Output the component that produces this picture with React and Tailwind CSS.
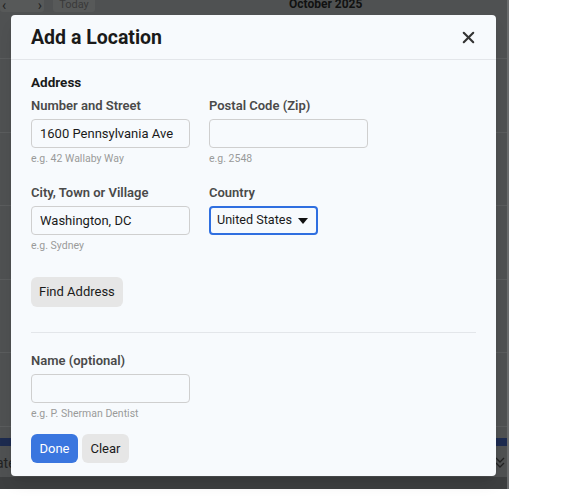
import React, { useState } from "react";
import { X } from "lucide-react";

function Field({ label, hint, value, onChange, width = "w-[159px]" }) {
  return (
    <div className="flex flex-col">
      <label className="text-[13px] font-semibold text-[#4a4a4a] leading-[16px] mb-[5px]">
        {label}
      </label>
      <input
        value={value}
        onChange={(e) => onChange(e.target.value)}
        className={`${width} h-[29px] rounded-[4px] border border-[#cfcfcf] bg-[#f7fafd] px-[8px] text-[13px] text-[#1a1a1a] outline-none`}
      />
      <span className="text-[10.5px] text-[#9a9a9a] mt-[4px] leading-[14px]">{hint}</span>
    </div>
  );
}

function App() {
  const [street, setStreet] = useState("1600 Pennsylvania Ave");
  const [zip, setZip] = useState("");
  const [city, setCity] = useState("Washington, DC");
  const [name, setName] = useState("");

  return (
    <div
      className="relative w-[579px] h-[500px] bg-white overflow-hidden"
      style={{ fontFamily: "Roboto, 'Liberation Sans', sans-serif" }}
    >
      {/* calendar behind the dialog, dimmed */}
      <div className="w-[509px] h-[489px] bg-[#4f5152] border-r-2 border-[#6a6c6d] flex flex-col">
        <div className="h-[59px] flex items-start relative border-b border-[#5a5c5d]">
          <div className="flex mt-[-9px]">
            <div className="w-[44px] h-[21px] rounded-[3px] bg-[#575959] flex items-end justify-between px-[2px] text-[#222] text-[14px] leading-[14px]">
              <span>‹</span>
              <span>›</span>
            </div>
            <div className="ml-[9px] w-[42px] h-[21px] rounded-[3px] bg-[#575959] flex items-end justify-center text-[11px] text-[#3a3a3a] leading-[14px]">
              Today
            </div>
          </div>
          <div className="absolute left-[289px] top-[-5px] text-[12px] font-bold text-[#111]">
            October 2025
          </div>
        </div>
        {[0, 1, 2, 3, 4].map((i) => (
          <div key={i} className="h-[73.5px] border-b border-[#5a5c5d]" />
        ))}
        <div className="h-[11px] bg-[#4f5152]" />
        <div className="h-[8px] bg-[#1d2b4f]" />
        <div className="flex-1 flex items-center justify-between pr-[1px]">
          <span className="text-[14px] text-[#222] ml-[-4px] mt-[4px]">ate</span>
          <svg width="12" height="14" viewBox="0 0 12 14" className="mt-[4px]">
            <path d="M2 2l4 4 4-4M2 7l4 4 4-4" fill="none" stroke="#222" strokeWidth="1.3" />
          </svg>
        </div>
        <div className="h-[12px] bg-[#3d3f40]" />
      </div>

      {/* dialog */}
      <div className="absolute left-[11px] top-[15px] w-[485px] h-[461px] bg-[#f7fafd] rounded-[4px] shadow-lg flex flex-col">
        <div className="h-[45px] shrink-0 flex items-center justify-between px-[20px] border-b border-[#e3e6ea]">
          <h2 className="text-[19.5px] font-bold text-[#1a1a1a] mt-[1px]">Add a Location</h2>
          <button className="text-[#333] mr-[-2px]">
            <X size={19} strokeWidth={2.6} />
          </button>
        </div>

        <div className="px-[20px] pt-[13px] flex flex-col">
          <h3 className="text-[13.5px] font-bold text-[#1a1a1a] leading-[18px] mb-[7px]">Address</h3>
          <div className="flex gap-[19px]">
            <Field label="Number and Street" hint="e.g. 42 Wallaby Way" value={street} onChange={setStreet} />
            <Field label="Postal Code (Zip)" hint="e.g. 2548" value={zip} onChange={setZip} />
          </div>
          <div className="flex gap-[19px] mt-[19px]">
            <Field label="City, Town or Village" hint="e.g. Sydney" value={city} onChange={setCity} />
            <div className="flex flex-col">
              <label className="text-[13px] font-semibold text-[#4a4a4a] leading-[16px] mb-[5px]">
                Country
              </label>
              <div className="w-[109px] h-[29px] rounded-[4px] border-2 border-[#2f6fe0] flex items-center gap-[6px] pl-[6px] text-[12.6px] text-[#1a1a1a] whitespace-nowrap">
                <span>United States</span>
                <svg width="10" height="6" viewBox="0 0 10 6">
                  <path d="M0 0h10L5 6z" fill="#111" />
                </svg>
              </div>
            </div>
          </div>

          <button className="self-start mt-[24px] h-[30px] px-[8px] rounded-[6px] bg-[#e6e6e6] text-[13px] text-[#1a1a1a]">
            Find Address
          </button>

          <div className="mt-[25px] border-t border-[#e3e6ea]" />

          <div className="mt-[20px]">
            <Field label="Name (optional)" hint="e.g. P. Sherman Dentist" value={name} onChange={setName} />
          </div>

          <div className="flex gap-[4px] mt-[13px]">
            <button className="h-[29px] w-[47px] rounded-[6px] bg-[#3a76df] text-white text-[13px]">Done</button>
            <button className="h-[29px] w-[47px] rounded-[6px] bg-[#e6e6e6] text-[#1a1a1a] text-[13px]">Clear</button>
          </div>
        </div>
      </div>
    </div>
  );
}

export default App;
